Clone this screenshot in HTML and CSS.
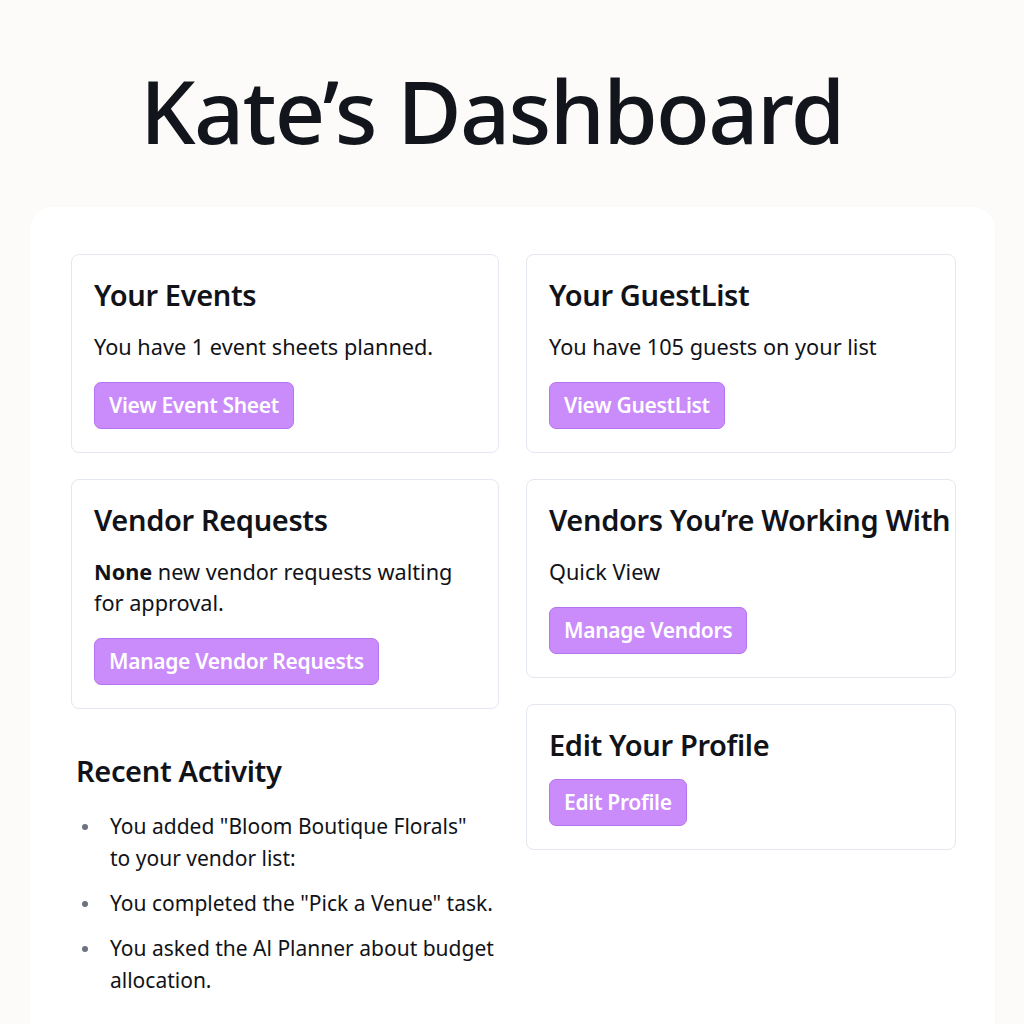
FILE: index.html
```html
<!DOCTYPE html>
<html lang="en">
<head>
<meta charset="utf-8">
<title>Kate's Dashboard</title>
<link rel="stylesheet" href="styles.css">
</head>
<body>
<header class="page-header">
  <h1 class="page-title">Kate’s Dashboard</h1>
</header>
<main class="panel">
  <div class="column">
    <section class="card">
      <h2 class="card-title">Your Events</h2>
      <p class="card-text">You have 1 event sheets planned.</p>
      <a class="btn" href="#">View Event Sheet</a>
    </section>
    <section class="card">
      <h2 class="card-title">Vendor Requests</h2>
      <p class="card-text"><strong>None</strong> new vendor requests walting for approval.</p>
      <a class="btn" href="#">Manage Vendor Requests</a>
    </section>
    <section class="activity">
      <h2 class="activity-title">Recent Activity</h2>
      <ul class="activity-list">
        <li><span>You added "Bloom Boutique Florals"<br>to your vendor list:</span></li>
        <li><span>You completed the "Pick a Venue" task.</span></li>
        <li><span>You asked the Al Planner about budget allocation.</span></li>
      </ul>
    </section>
  </div>
  <div class="column">
    <section class="card">
      <h2 class="card-title">Your GuestList</h2>
      <p class="card-text">You have 105 guests on your list</p>
      <a class="btn" href="#">View GuestList</a>
    </section>
    <section class="card">
      <h2 class="card-title nowrap">Vendors You’re Working With</h2>
      <p class="card-text">Quick View</p>
      <a class="btn" href="#">Manage Vendors</a>
    </section>
    <section class="card">
      <h2 class="card-title tight">Edit Your Profile</h2>
      <a class="btn" href="#">Edit Profile</a>
    </section>
  </div>
</main>
</body>
</html>
```
FILE: styles.css
```css
* { box-sizing: border-box; }
html, body { margin: 0; padding: 0; }
body {
  background: #fcfbf9;
  font-family: "Noto Sans", "Open Sans", sans-serif;
  color: #111318;
  height: 1024px;
  overflow: hidden;
}
.page-header {
  padding: 66px 0 0 140px;
  height: 207px;
}
.page-title {
  margin: 0;
  font-size: 88px;
  font-weight: 500;
  line-height: 1;
  letter-spacing: -1.65px;
  color: #12151b;
}
.panel {
  margin: 0 29px 0 30px;
  background: #ffffff;
  border-radius: 22px;
  padding: 47px 39px 60px 41px;
  display: grid;
  grid-template-columns: 428px 430px;
  column-gap: 27px;
  align-items: start;
  min-height: 900px;
  box-shadow: 0 0 2px rgba(0,0,0,0.02);
}
.column {
  min-width: 0;
  display: flex;
  flex-direction: column;
  gap: 26px;
}
.card {
  border: 1px solid #e3e8f0;
  border-radius: 8px;
  padding: 22px 22px 23px;
  background: #fff;
}
.card-title {
  margin: 0 0 18px;
  font-size: 29px;
  font-weight: 600;
  line-height: 36px;
  letter-spacing: -0.35px;
  color: #111318;
}
.card-title.tight { margin-bottom: 16px; }
.nowrap { white-space: nowrap; }
.card-text {
  margin: 0 0 20px;
  font-size: 21.7px;
  line-height: 31px;
  color: #111318;
}
.card-text strong { font-weight: 700; }
.btn {
  display: inline-block;
  background: #c98cfa;
  border: 1px solid #b574f0;
  border-radius: 7px;
  color: #ffffff;
  text-decoration: none;
  font-size: 21px;
  font-weight: 600;
  letter-spacing: -0.3px;
  line-height: 45px;
  padding: 0 14px;
}
.activity { padding: 18px 0 0 5px; }
.activity-title {
  margin: 0 0 21px;
  font-size: 29px;
  font-weight: 600;
  letter-spacing: -0.35px;
  line-height: 36px;
}
.activity-list {
  margin: 0;
  padding: 0;
  list-style: none;
  font-size: 21px;
  line-height: 32px;
}
.activity-list li {
  display: flex;
  margin-bottom: 13px;
}
.activity-list li::before {
  content: "";
  flex: 0 0 6px;
  width: 6px;
  height: 6px;
  border-radius: 50%;
  background: #6b7380;
  margin: 14px 22px 0 6px;
}
```
